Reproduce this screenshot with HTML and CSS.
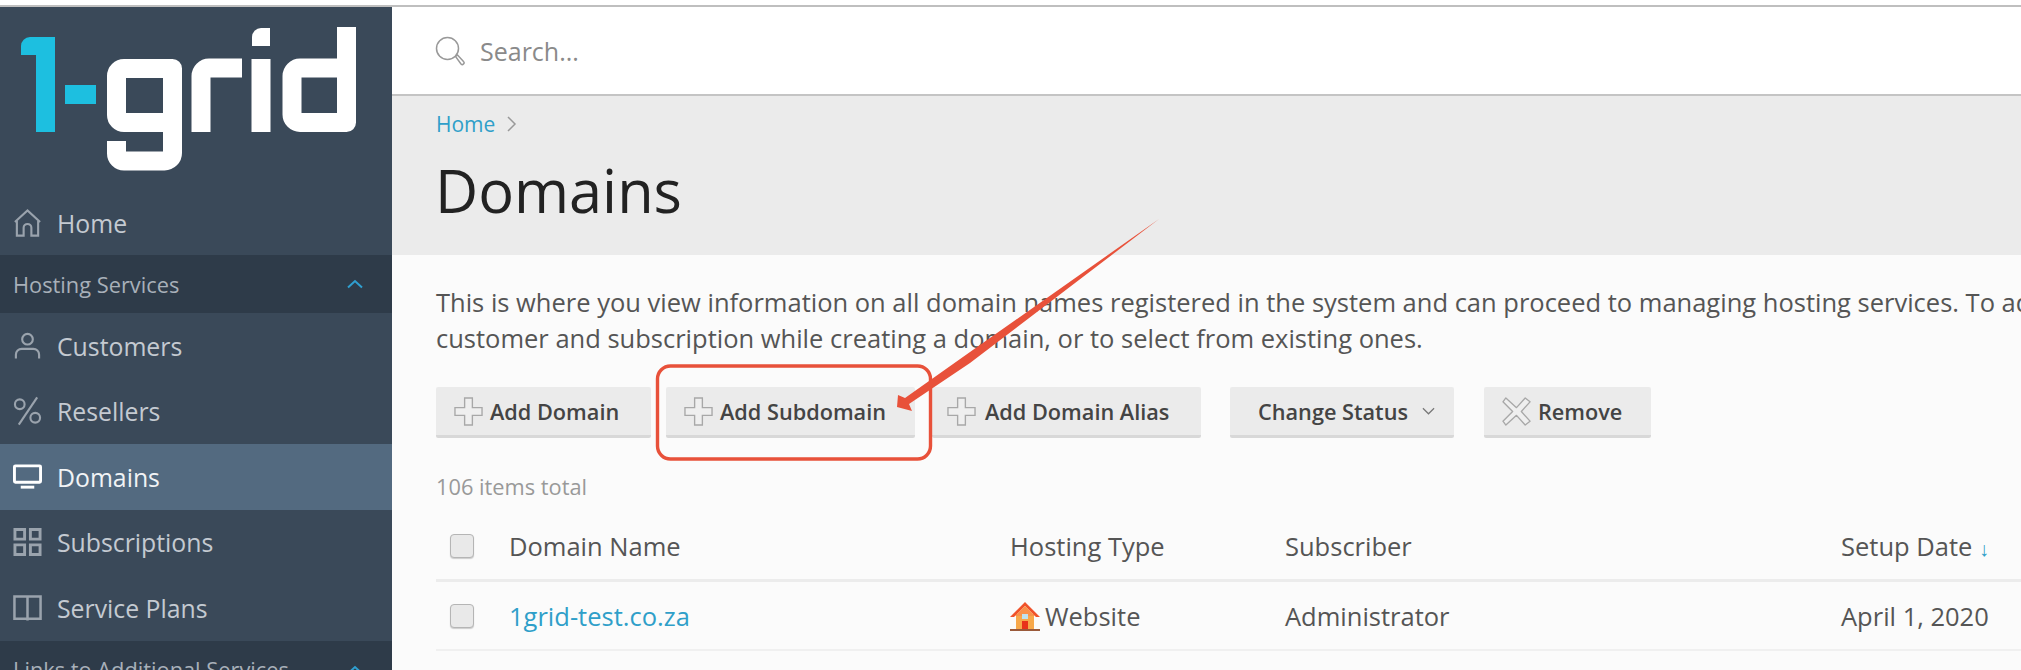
FILE: index.html
```html
<!DOCTYPE html>
<html lang="en">
<head>
<meta charset="utf-8">
<title>Domains</title>
<link rel="stylesheet" href="styles.css">
</head>
<body>
<div class="topstrip"></div>
<div class="app">
  <aside class="sidebar">
    <div class="logo">
      <svg width="392" height="183" viewBox="0 7 392 183" role="img" aria-label="1-grid">
        <g fill="none" stroke="#fff" stroke-width="19" stroke-linejoin="round">
          <path d="M172.500 122.500H124a7.500 7.500 0 0 1-7.500-7.500V76a7.500 7.500 0 0 1 7.500-7.500h48.500V153a8 8 0 0 1-8 8H124a7.500 7.500 0 0 1-7.500-7.500V141"/>
          <path d="M201 132V76a8 8 0 0 1 8-8h33"/>
          <path d="M261 132V59"/>
          <path d="M346.500 27V122.500H300a8 8 0 0 1-8-8V76a8 8 0 0 1 8-8h46.500"/>
        </g>
        <path d="M252 46V37a9 9 0 0 1 9-9h9v18z" fill="#fff"/>
        <path d="M21 55V46a9 9 0 0 1 9-9h25v95H36V55z" fill="#1dbfe0"/>
        <rect x="65" y="85" width="31" height="19" fill="#1dbfe0"/>
      </svg>
    </div>
    <a class="nav-item"><svg class="nav-icon" viewBox="0 0 30 30"><path d="M2 14 15 2l13 12M4 13v15h7v-8a4 4 0 0 1 8 0v8h7V13" fill="none" stroke="currentColor" stroke-width="2.200"/></svg><span>Home</span></a>
    <div class="section"><span>Hosting Services</span><svg class="chev" viewBox="0 0 16 10"><path d="M1 8.500 8 2l7 6.500" fill="none" stroke="#2f9fd0" stroke-width="2"/></svg></div>
    <a class="nav-item"><svg class="nav-icon" viewBox="0 0 30 30"><circle cx="15" cy="8" r="5.500" fill="none" stroke="currentColor" stroke-width="2.200"/><path d="M3 28v-4a6 6 0 0 1 6-6h12a6 6 0 0 1 6 6v4" fill="none" stroke="currentColor" stroke-width="2.200"/></svg><span>Customers</span></a>
    <a class="nav-item"><svg class="nav-icon" viewBox="0 0 30 30"><circle cx="7" cy="8" r="5" fill="none" stroke="currentColor" stroke-width="2.200"/><circle cx="23" cy="22" r="5" fill="none" stroke="currentColor" stroke-width="2.200"/><path d="M25 1 6 29" fill="none" stroke="currentColor" stroke-width="2.200"/></svg><span>Resellers</span></a>
    <a class="nav-item active"><svg class="nav-icon" viewBox="0 0 30 30"><rect x="1.500" y="3.500" width="27" height="17" rx="1" fill="none" stroke="currentColor" stroke-width="3"/><rect x="8" y="24" width="14" height="3" fill="currentColor"/></svg><span>Domains</span></a>
    <a class="nav-item"><svg class="nav-icon" viewBox="0 0 30 30"><path d="M2 2h10v10H2zM18 2h10v10H18zM2 18h10v10H2zM18 18h10v10H18z" fill="none" stroke="currentColor" stroke-width="3"/></svg><span>Subscriptions</span></a>
    <a class="nav-item"><svg class="nav-icon" viewBox="0 0 30 30"><path d="M1.500 3h27v23h-27zM15 3v25" fill="none" stroke="currentColor" stroke-width="2.600"/></svg><span>Service Plans</span></a>
    <div class="section"><span>Links to Additional Services</span><svg class="chev" viewBox="0 0 16 10"><path d="M1 8.500 8 2l7 6.500" fill="none" stroke="#2f9fd0" stroke-width="2"/></svg></div>
  </aside>
  <main class="main">
    <header class="search">
      <svg class="search-icon" viewBox="0 0 30 30"><circle cx="12.500" cy="12.500" r="11" fill="none" stroke="#999" stroke-width="1.500"/><path d="m20.500 20.500 2-1.500 6 6.500a1.500 1.500 0 0 1-2.500 2.500z" fill="none" stroke="#999" stroke-width="1.500"/></svg>
      <span>Search...</span>
    </header>
    <section class="pagehead">
      <nav class="crumbs"><a>Home</a><svg class="crumb-chev" viewBox="0 0 10 16"><path d="m1 1 7 7-7 7" fill="none" stroke="#999" stroke-width="1.500"/></svg></nav>
      <h1>Domains</h1>
    </section>
    <section class="content">
      <p class="intro">This is where you view information on all domain names registered in the system and can proceed to managing hosting services. To add a new domain, to create a new<br>customer and subscription while creating a domain, or to select from existing ones.</p>
      <div class="toolbar">
        <button class="btn btn-domain"><svg class="btn-icon" viewBox="0 0 30 30"><path d="M11 1h8v10h10v8H19v10h-8V19H1v-8h10z" fill="#efefef" stroke="#a8a8a8" stroke-width="1.400"/></svg>Add Domain</button>
        <button class="btn btn-sub"><svg class="btn-icon" viewBox="0 0 30 30"><path d="M11 1h8v10h10v8H19v10h-8V19H1v-8h10z" fill="#efefef" stroke="#a8a8a8" stroke-width="1.400"/></svg>Add Subdomain</button>
        <button class="btn btn-alias"><svg class="btn-icon" viewBox="0 0 30 30"><path d="M11 1h8v10h10v8H19v10h-8V19H1v-8h10z" fill="#efefef" stroke="#a8a8a8" stroke-width="1.400"/></svg>Add Domain Alias</button>
        <button class="btn btn-status">Change Status<svg class="btn-chev" viewBox="0 0 14 8"><path d="m1 1 6 6 6-6" fill="none" stroke="#777" stroke-width="1.300"/></svg></button>
        <button class="btn btn-remove"><svg class="btn-icon" viewBox="0 0 30 30"><path d="M4 1 15 11 24 1l5 4-9 10 9 10-5 4-9-10-11 10-3-4 10-10L1 5z" fill="#efefef" stroke="#a8a8a8" stroke-width="1.400" stroke-linejoin="round"/></svg>Remove</button>
      </div>
      <div class="total">106 items total</div>
      <div class="table">
        <div class="row row-head">
          <span class="check"></span><span>Domain Name</span><span>Hosting Type</span><span>Subscriber</span><span>Setup Date <i class="sort">↓</i></span>
        </div>
        <div class="row">
          <span class="check"></span><a class="link">1grid-test.co.za</a>
          <span class="host"><svg class="house" viewBox="0 0 30 30"><path d="M6 13h18v15H6z" fill="#f7a84a"/><path d="M15 1 0 16h4l11-11 11 11h4z" fill="#f0522a"/><path d="M15 5 5 15h20z" fill="#f9924a"/><rect x="12" y="13" width="6" height="5" fill="#bfe3ee"/><rect x="12" y="20" width="6" height="8" fill="#e8321a"/><rect x="0" y="28" width="30" height="2" fill="#9a5a3a"/></svg>Website</span>
          <span>Administrator</span><span>April 1, 2020</span>
        </div>
        <div class="row">
          <span class="check"></span><span></span>
          <span class="host"><svg class="house" viewBox="0 0 30 30"><path d="M15 1 0 16h4l11-11 11 11h4z" fill="#f0522a"/></svg></span>
          <span></span><span></span>
        </div>
      </div>
    </section>
  </main>
</div>
<svg class="annotation" width="2021" height="670" viewBox="0 0 2021 670" aria-hidden="true">
  <rect x="657.500" y="366" width="273" height="93" rx="13" fill="none" stroke="#e8513a" stroke-width="3.400"/>
  <path d="M1159 219 970 352 905 398 898 395 897 407 912 411 909 404 970 363z" fill="#e8513a"/>
</svg>
</body>
</html>
```

FILE: styles.css
```css
* { box-sizing: border-box; }
html, body { margin: 0; height: 670px; overflow: hidden; }
body { background: #fff; font-family: "Open Sans", sans-serif; color: #555; position: relative; }

.topstrip { height: 7px; background: #fff; border-bottom: 2px solid #bfbfbf; }
.app { display: flex; height: 663px; overflow: hidden; }

.sidebar { width: 392px; flex: none; background: #3a4959; color: #c4cad1; }
.logo { height: 183px; }
.logo svg { display: block; }
.nav-item { display: flex; align-items: center; height: 65.500px; padding-left: 13px; gap: 15px; font-size: 24.800px; font-weight: 500; }
.nav-item:first-of-type { height: 65px; }
.nav-item.active { background: #536a80; color: #f1f3f5; }
.nav-icon { width: 29px; height: 30px; flex: none; color: #9aa3ad; }
.active .nav-icon { color: #fff; }
.section { display: flex; align-items: center; justify-content: space-between; height: 58px; padding: 0 29px 0 13px; background: #2e3b49; color: #a8b0b9; font-size: 21.800px; }
.chev { width: 16px; height: 10px; }

.main { flex: 1; min-width: 0; display: flex; flex-direction: column; background: #fbfbfb; }
.search { flex: none; height: 89px; display: flex; align-items: center; gap: 15px; padding-left: 43px; background: #fff; border-bottom: 2px solid #c4c4c4; font-size: 25px; color: #8a8a8a; }
.search-icon { width: 30px; height: 30px; }
.pagehead { flex: none; height: 159px; background: #ebebeb; padding: 13px 0 0 44px; }
.crumbs { display: flex; align-items: center; gap: 12px; font-size: 21px; color: #2f9fc9; line-height: 30px; }
.crumb-chev { width: 10px; height: 16px; }
h1 { margin: 11px 0 0 -1px; font-size: 59.500px; font-weight: 500; line-height: 80px; color: #222; }

.content { flex: none; padding: 29px 0 0 44px; overflow: hidden; }
.intro { margin: 0; white-space: nowrap; font-size: 25.500px; line-height: 36px; color: #555; }
.toolbar { display: flex; margin-top: 31px; }
.btn { height: 51px; display: flex; align-items: center; flex: none; font: 600 21.700px "Open Sans", sans-serif; color: #444; background: #ebebeb; border: 0; border-bottom: 3px solid #d8d8d8; border-radius: 2px; padding: 0; }
.btn-icon { width: 29px; height: 29px; margin-right: 7px; }
.btn-domain { width: 215px; padding-left: 18px; margin-right: 15px; }
.btn-sub { width: 249px; padding-left: 18px; margin-right: 17px; }
.btn-alias { width: 269px; padding-left: 15px; margin-right: 29px; }
.btn-alias .btn-icon { margin-right: 9px; }
.btn-status { width: 224px; padding-left: 28px; margin-right: 30px; }
.btn-chev { width: 13px; height: 8px; margin-left: 14px; }
.btn-remove { width: 167px; padding-left: 18px; }
.total { margin-top: 35px; font-size: 21.800px; line-height: 28px; color: #999; }

.table { margin-top: 12px; font-size: 25.500px; color: #555; }
.row { display: grid; grid-template-columns: 73px 501px 275px 556px 1fr; align-items: center; height: 69px; border-bottom: 2px solid #f0f0f0; }
.row-head { border-bottom: 3px solid #ececec; }
.check { width: 24px; height: 24px; margin-left: 14px; background: #e9e9e9; border: 1px solid #b5b5b5; border-radius: 4px; box-shadow: 0 1px 1px #ccc; }
.link { color: #2f9fc9; }
.host { display: flex; align-items: center; gap: 5px; }
.house { width: 30px; height: 30px; flex: none; }
.sort { font-style: normal; font-weight: 700; color: #2f9fc9; font-size: 20px; }

.annotation { position: absolute; left: 0; top: 0; pointer-events: none; }
```
